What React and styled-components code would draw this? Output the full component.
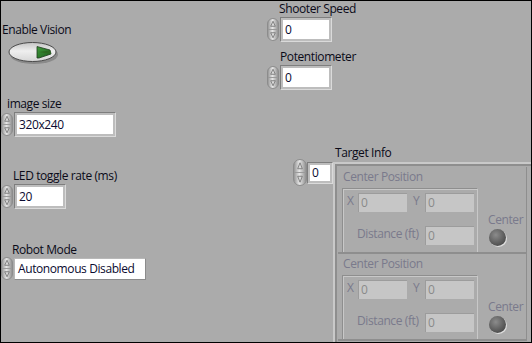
import React from "react";
import styled, { createGlobalStyle } from "styled-components";

const Global = createGlobalStyle`
  html, body { margin: 0; padding: 0; background: #ababab; }
  body { font-family: "Open Sans", "Noto Sans", sans-serif; }
`;

const Panel = styled.div`
  position: relative;
  width: 532px;
  height: 343px;
  box-sizing: border-box;
  border: 1px solid #000;
  background: #ababab;
  overflow: hidden;
  font-size: 12px;
  letter-spacing: -0.4px;
  color: #0a0a18;
`;

const Item = styled.div`
  position: absolute;
  left: ${(p) => p.$x - 1}px;
  top: ${(p) => p.$y - 1}px;
  display: flex;
  flex-direction: column;
  align-items: flex-start;
`;

const Label = styled.div`
  height: 15px;
  line-height: 15px;
  white-space: nowrap;
  padding-left: ${(p) => p.$indent || 0}px;
  margin-bottom: ${(p) => p.$gap ?? 1}px;
  color: ${(p) => (p.$disabled ? "#7a7a8c" : "#0a0a18")};
`;

const Row = styled.div`
  display: flex;
  align-items: center;
  gap: ${(p) => p.$gap ?? 1}px;
`;

const NumFrame = styled.div`
  box-sizing: border-box;
  width: ${(p) => p.$w}px;
  height: ${(p) => p.$h || 25}px;
  border: 1px solid;
  border-color: #7e7e7e #dadada #dadada #7e7e7e;
  background: #bdbdbd;
  padding: 2px;
  display: flex;
`;

const Field = styled.div`
  flex: 1;
  background: #fff;
  color: #0a0a30;
  line-height: ${(p) => p.$lh || 19}px;
  padding-left: 2px;
  white-space: nowrap;
  overflow: hidden;
`;

const DisabledBox = styled.div`
  box-sizing: border-box;
  width: ${(p) => p.$w}px;
  height: 19px;
  border-top: 1px solid #9c9c9c;
  border-left: 1px solid #9c9c9c;
  background: #c6c6c6;
  color: #8a8a8a;
  line-height: 17px;
  padding-left: 2px;
`;

const Ring = styled.div`
  box-sizing: border-box;
  width: ${(p) => p.$w}px;
  height: 22px;
  border: 1px solid;
  border-color: #b8b8b8 #8c8c8c #8c8c8c #b8b8b8;
  background: #fff;
  line-height: 20px;
  padding-left: 3px;
  color: #0a0a30;
  white-space: nowrap;
`;

const ArrayFrame = styled.div`
  position: absolute;
  left: 332px;
  top: 161px;
  width: 210px;
  height: 200px;
  box-sizing: border-box;
  border-top: 2px solid #c9c9c9;
  border-left: 2px solid #c9c9c9;
  box-shadow: inset 2px 2px 0 #8e8e8e;
  padding: 3px 0 0 3px;
  display: flex;
  flex-direction: column;
`;

const Element = styled.div`
  position: relative;
  width: 189px;
  height: 87px;
  box-sizing: border-box;
  border-bottom: 2px solid #8e8e8e;
  border-right: 1px solid #8e8e8e;
  overflow: hidden;
  flex: none;
`;

const Abs = styled.div`
  position: absolute;
  left: ${(p) => p.$x}px;
  top: ${(p) => p.$y}px;
  display: flex;
  flex-direction: ${(p) => p.$dir || "row"};
  align-items: ${(p) => p.$align || "center"};
  gap: ${(p) => p.$gap || 0}px;
`;

const InnerFrame = styled.div`
  position: absolute;
  left: 4px;
  top: 21px;
  width: 136px;
  height: 120px;
  box-sizing: border-box;
  border-top: 1px solid #8e8e8e;
  border-left: 1px solid #8e8e8e;
  border-right: 1px solid #c8c8c8;
  box-shadow: inset 1px 1px 0 #c8c8c8;
`;

const DimText = styled.span`
  color: #7a7a8c;
  white-space: nowrap;
  line-height: 15px;
`;

const Spinner = ({ w = 12, h = 23 }) => (
  <svg width={w} height={h} viewBox={`0 0 ${w} ${h}`}>
    <defs>
      <linearGradient id={`sg${w}`} x1="0" x2="1" y1="0" y2="0">
        <stop offset="0" stopColor="#8f8f8f" />
        <stop offset="0.45" stopColor="#e6e6e6" />
        <stop offset="1" stopColor="#8a8a8a" />
      </linearGradient>
    </defs>
    <rect x="0.5" y="0.5" width={w - 1} height={h - 1} rx={(w - 1) / 2} fill={`url(#sg${w})`} stroke="#8c8c8c" />
    <line x1="1" x2={w - 1} y1={h / 2} y2={h / 2} stroke="#9a9a9a" />
    <path d={`M${w / 2} ${h * 0.14} L${w / 2 + 2.3} ${h * 0.36} H${w / 2 - 2.3} Z`} fill="#d8d8d8" stroke="#6e6e6e" strokeWidth="0.8" />
    <path d={`M${w / 2} ${h * 0.86} L${w / 2 + 2.3} ${h * 0.64} H${w / 2 - 2.3} Z`} fill="#d8d8d8" stroke="#6e6e6e" strokeWidth="0.8" />
  </svg>
);

const Toggle = () => (
  <svg width="54" height="26" viewBox="0 0 54 26">
    <defs>
      <linearGradient id="tg" x1="0" x2="0" y1="0" y2="1">
        <stop offset="0" stopColor="#c4c4c4" />
        <stop offset="0.45" stopColor="#efefef" />
        <stop offset="1" stopColor="#d6d6d6" />
      </linearGradient>
      <linearGradient id="gg" x1="0" x2="1" y1="0" y2="1">
        <stop offset="0" stopColor="#3f9a3a" />
        <stop offset="1" stopColor="#1f5f1f" />
      </linearGradient>
    </defs>
    <ellipse cx="26" cy="13.5" rx="24" ry="9.5" fill="#6f6f6f" opacity="0.55" />
    <ellipse cx="24.5" cy="11" rx="23.5" ry="9.5" fill="url(#tg)" stroke="#4a4a4a" />
    <path d="M29 5.5 L42 9 L43 13 L31 17 L29 17 Z" fill="url(#gg)" stroke="#1e3a1e" strokeWidth="0.8" />
    <path d="M31 11 L42 9.5 L43 13 Z" fill="#2d6a22" />
  </svg>
);

const Led = () => (
  <svg width="20" height="20" viewBox="0 0 20 20">
    <defs>
      <radialGradient id="lg" cx="0.4" cy="0.35" r="0.65">
        <stop offset="0" stopColor="#8c8c8c" />
        <stop offset="1" stopColor="#4e4e4e" />
      </radialGradient>
    </defs>
    <circle cx="10.5" cy="10.5" r="8.5" fill="#dedede" />
    <circle cx="9.5" cy="9.5" r="8.5" fill="url(#lg)" />
  </svg>
);

const NumericControl = ({ x, y, label, indent, gap, w, value, h }) => (
  <Item $x={x} $y={y}>
    <Label $indent={indent} $gap={gap}>{label}</Label>
    <Row>
      <Spinner />
      <NumFrame $w={w} $h={h}>
        <Field $lh={h ? h - 6 : 19}>{value}</Field>
      </NumFrame>
    </Row>
  </Item>
);

const ClusterElement = () => (
  <Element>
    <Abs $x={5} $y={2}>
      <DimText>Center Position</DimText>
    </Abs>
    <InnerFrame />
    <Abs $x={9} $y={26}>
      <DimText>X</DimText>
    </Abs>
    <Abs $x={20} $y={26}>
      <DisabledBox $w={49}>0</DisabledBox>
    </Abs>
    <Abs $x={75} $y={26}>
      <DimText>Y</DimText>
    </Abs>
    <Abs $x={87} $y={26}>
      <DisabledBox $w={49}>0</DisabledBox>
    </Abs>
    <Abs $x={19} $y={59}>
      <DimText>Distance (ft)</DimText>
    </Abs>
    <Abs $x={87} $y={59}>
      <DisabledBox $w={49}>0</DisabledBox>
    </Abs>
    <Abs $x={150} $y={45} $dir="column" $align="flex-start" $gap={1}>
      <DimText>Center</DimText>
      <Led />
    </Abs>
  </Element>
);

export default function App() {
  return (
    <>
      <Global />
      <Panel>
        <Item $x={2} $y={22}>
          <Label $gap={4}>Enable Vision</Label>
          <Row>
            <span style={{ width: 5 }} />
            <Toggle />
          </Row>
        </Item>

        <NumericControl x={267} y={1} label="Shooter Speed" indent={12} w={52} value="0" />
        <NumericControl x={267} y={49} label="Potentiometer" indent={13} w={52} value="0" />
        <NumericControl x={1} y={96} label="image size" indent={6} w={102} value="320x240" />
        <NumericControl x={1} y={168} label="LED toggle rate (ms)" indent={12} w={52} value="20" />

        <Item $x={1} $y={242}>
          <Label $indent={11} $gap={0}>Robot Mode</Label>
          <Row>
            <Spinner />
            <Ring $w={132}>Autonomous Disabled</Ring>
          </Row>
        </Item>

        <Item $x={335} $y={145}>
          <Label>Target Info</Label>
        </Item>
        <Item $x={293} $y={159}>
          <Row $gap={0}>
            <Spinner w={14} h={27} />
            <NumFrame $w={26} $h={22}>
              <Field $lh={16}>0</Field>
            </NumFrame>
          </Row>
        </Item>

        <ArrayFrame>
          <ClusterElement />
          <ClusterElement />
        </ArrayFrame>
      </Panel>
    </>
  );
}
